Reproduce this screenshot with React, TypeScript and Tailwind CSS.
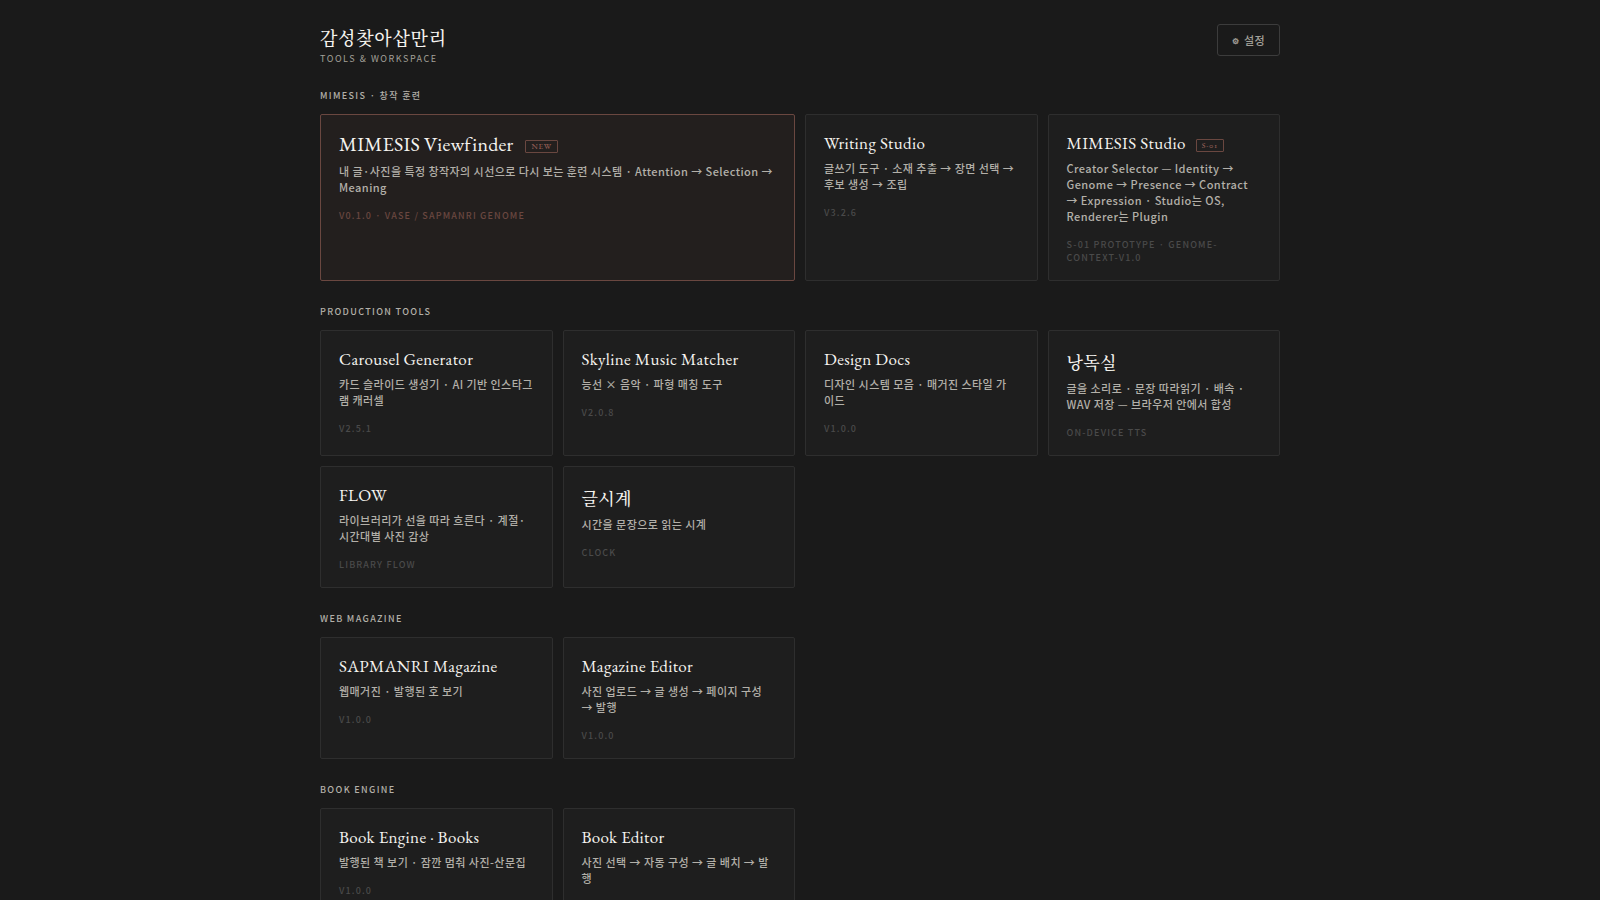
interface Tool {
  title: string;
  desc: string;
  meta: string;
  href: string;
  badge?: string;
  featured?: boolean;
  korean?: boolean;
}

interface Section {
  label: string;
  tools: Tool[];
}

const sections: Section[] = [
  {
    label: "Mimesis · 창작 훈련",
    tools: [
      {
        title: "MIMESIS Viewfinder",
        badge: "NEW",
        desc: "내 글·사진을 특정 창작자의 시선으로 다시 보는 훈련 시스템 · Attention → Selection → Meaning",
        meta: "v0.1.0 · VASE / SAPMANRI Genome",
        href: "#viewfinder",
        featured: true,
      },
      {
        title: "Writing Studio",
        desc: "글쓰기 도구 · 소재 추출 → 장면 선택 → 후보 생성 → 조립",
        meta: "v3.2.6",
        href: "#writing-studio",
      },
      {
        title: "MIMESIS Studio",
        badge: "S-01",
        desc: "Creator Selector — Identity → Genome → Presence → Contract → Expression · Studio는 OS, Renderer는 Plugin",
        meta: "S-01 Prototype · genome-context-v1.0",
        href: "#mimesis-studio",
      },
    ],
  },
  {
    label: "Production Tools",
    tools: [
      {
        title: "Carousel Generator",
        desc: "카드 슬라이드 생성기 · AI 기반 인스타그램 캐러셀",
        meta: "v2.5.1",
        href: "#carousel",
      },
      {
        title: "Skyline Music Matcher",
        desc: "능선 × 음악 · 파형 매칭 도구",
        meta: "v2.0.8",
        href: "#skyline",
      },
      {
        title: "Design Docs",
        desc: "디자인 시스템 모음 · 매거진 스타일 가\n이드",
        meta: "v1.0.0",
        href: "#design-docs",
      },
      {
        title: "낭독실",
        desc: "글을 소리로 · 문장 따라읽기 · 배속 · WAV 저장 — 브라우저 안에서 합성",
        meta: "On-device TTS",
        href: "#reading-room",
        korean: true,
      },
      {
        title: "FLOW",
        desc: "라이브러리가 선을 따라 흐른다 · 계절·시간대별 사진 감상",
        meta: "Library Flow",
        href: "#flow",
      },
      {
        title: "글시계",
        desc: "시간을 문장으로 읽는 시계",
        meta: "Clock",
        href: "#clock",
        korean: true,
      },
    ],
  },
  {
    label: "Web Magazine",
    tools: [
      {
        title: "SAPMANRI Magazine",
        desc: "웹매거진 · 발행된 호 보기",
        meta: "v1.0.0",
        href: "#magazine",
      },
      {
        title: "Magazine Editor",
        desc: "사진 업로드 → 글 생성 → 페이지 구성 → 발행",
        meta: "v1.0.0",
        href: "#magazine-editor",
      },
    ],
  },
  {
    label: "Book Engine",
    tools: [
      {
        title: "Book Engine · Books",
        desc: "발행된 책 보기 · 잠깐 멈춰 사진-산문집",
        meta: "v1.0.0",
        href: "#books",
      },
      {
        title: "Book Editor",
        desc: "사진 선택 → 자동 구성 → 글 배치 → 발행",
        meta: "v1.0.0",
        href: "#book-editor",
      },
    ],
  },
];

const serif =
  "font-['EB_Garamond','Liberation_Serif','Noto_Serif_CJK_KR','Noto_Sans_CJK_KR',serif]";

function titleSize(tool: Tool) {
  if (tool.featured)
    return "mb-1.5 gap-3 text-[20px] leading-[25px] tracking-[0.01em]";
  if (tool.korean)
    return "mb-0.5 text-[17px] leading-[30px] font-medium tracking-[0.02em]";
  return "mb-1.5 gap-2.5 text-[17px] leading-[22px] tracking-[0.02em]";
}

function ToolCard({ tool }: { tool: Tool }) {
  return (
    <a
      href={tool.href}
      className={`block rounded-xs border px-[18px] pt-[17px] pb-4 transition-colors ${
        tool.featured
          ? "md:col-span-2 border-[#6a4740] bg-[#231f1e] hover:border-[#8a5850]"
          : "border-[#2e2e2e] bg-[#1e1e1e] hover:border-[#444]"
      }`}
    >
      <h3
        className={`${serif} flex items-center text-[#f5f3ef] ${titleSize(tool)}`}
      >
        {tool.title}
        {tool.badge && (
          <span className="mt-1 rounded-[1px] border border-[#6a4740] px-[5px] text-[8px] leading-[11px] tracking-widest text-[#a5685e] oldstyle-nums">
            {tool.badge}
          </span>
        )}
      </h3>
      <p className="text-[11px] leading-4 font-medium tracking-[0.04em] whitespace-pre-line text-[#b3b0a9]">
        {tool.desc}
      </p>
      <p
        className={`mt-3.5 text-[9px] leading-[13px] font-medium tracking-[0.13em] uppercase ${
          tool.featured ? "text-[#6a4740]" : "text-[#4a4a4a]"
        }`}
      >
        {tool.meta}
      </p>
    </a>
  );
}

export default function App() {
  return (
    <div className="min-h-screen bg-[#1a1a1a] font-['Noto_Sans_CJK_KR',sans-serif]">
      <div className="mx-auto max-w-[1008px] px-6 pt-6 pb-12">
        <header className="flex items-start justify-between">
          <div>
            <h1
              className={`${serif} text-[18px] leading-[29px] font-medium tracking-[0.04em] text-[#f5f3ef]`}
            >
              감성찾아삽만리
            </h1>
            <p className="text-[9px] leading-3 tracking-[0.17em] text-[#a3a099] uppercase">
              Tools &amp; Workspace
            </p>
          </div>
          <button
            type="button"
            className="flex h-8 cursor-pointer items-center gap-1 rounded-[3px] border border-[#3c3c3c] px-3.5 text-[11px] font-medium tracking-[0.04em] text-[#a3a099] hover:border-[#555]"
          >
            <span className="pt-0.5 text-[8px] font-bold" aria-hidden="true">
              ⚙
            </span>
            설정
          </button>
        </header>

        {sections.map((section) => (
          <section key={section.label} className="mt-6">
            <h2 className="mb-3 text-[9px] leading-[13px] font-medium tracking-[0.15em] text-[#b3b0a9] uppercase">
              {section.label}
            </h2>
            <div className="grid grid-cols-1 gap-2.5 sm:grid-cols-2 md:grid-cols-4">
              {section.tools.map((tool) => (
                <ToolCard key={tool.title} tool={tool} />
              ))}
            </div>
          </section>
        ))}
      </div>
    </div>
  );
}
